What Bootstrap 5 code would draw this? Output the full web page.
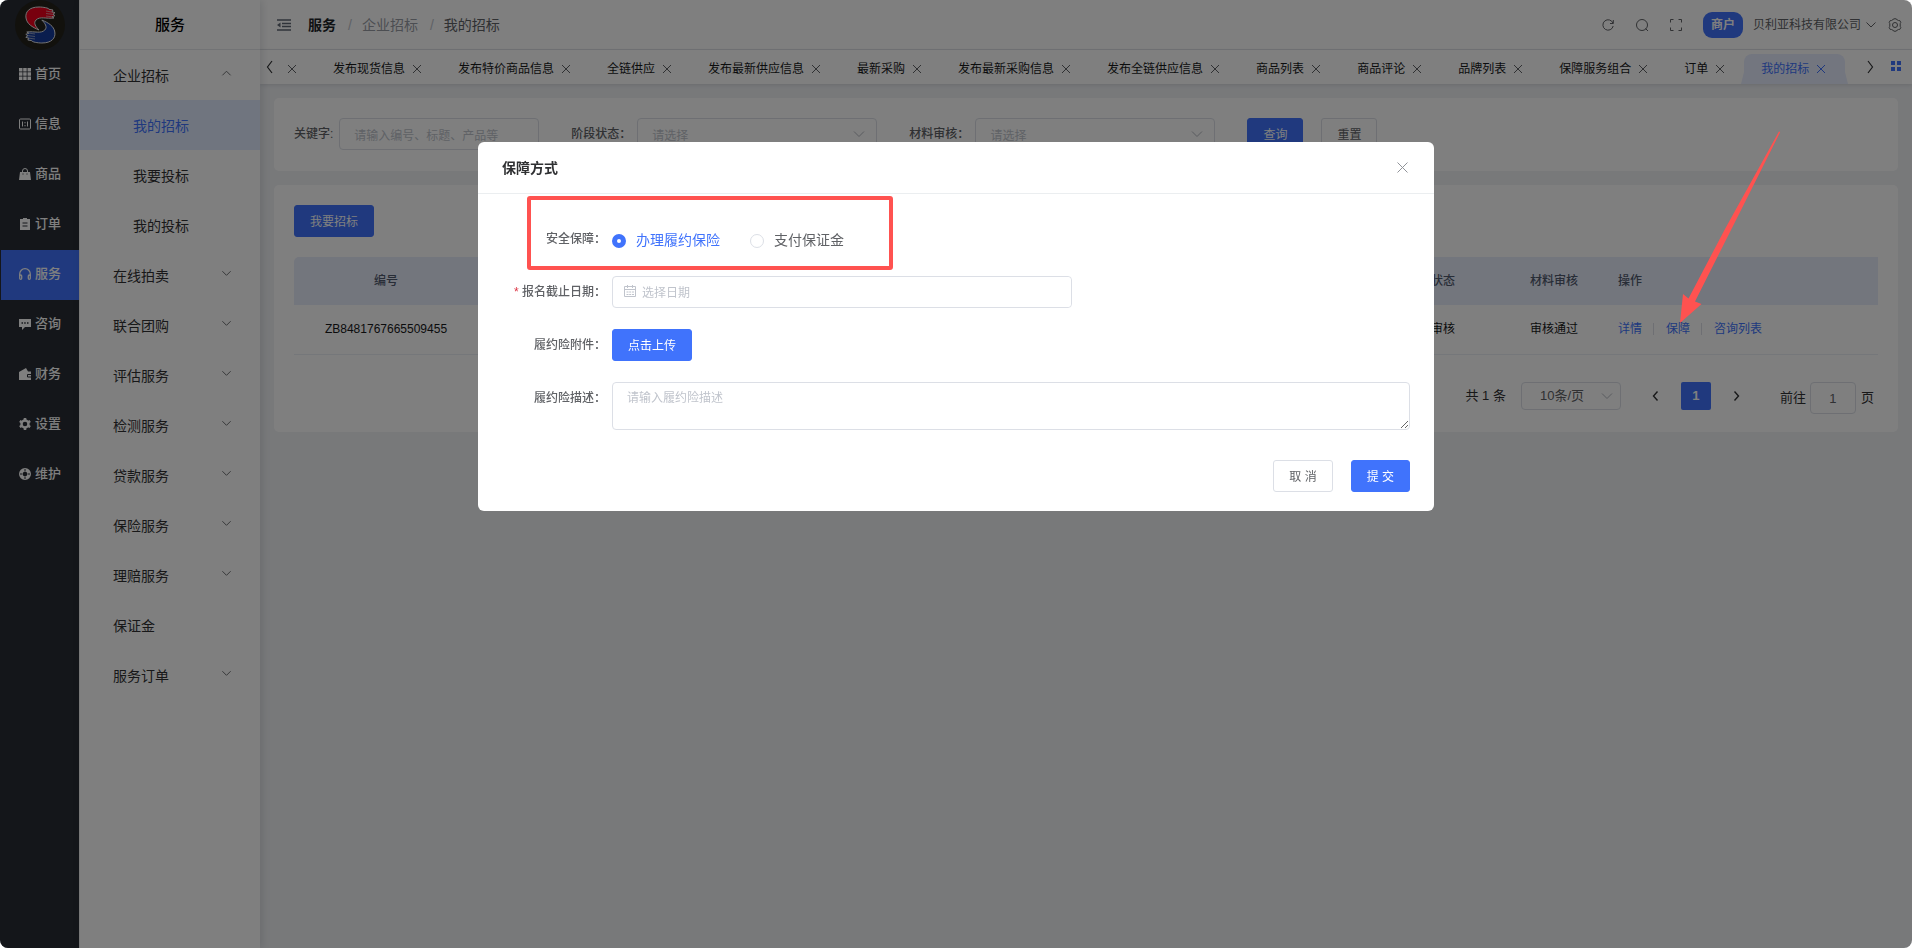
<!DOCTYPE html>
<html lang="zh-CN">
<head>
<meta charset="utf-8">
<meta name="viewport" content="width=device-width, initial-scale=1">
<title>我的招标</title>
<link href="https://cdn.jsdelivr.net/npm/bootstrap@5.3.0/dist/css/bootstrap.min.css" rel="stylesheet">
<script defer src="https://cdn.jsdelivr.net/npm/bootstrap@5.3.0/dist/js/bootstrap.bundle.min.js"></script>
<style>
:root{--brand:#4073fc;--brand-soft:#e0ebff;--ink:#303133;--ink-2:#606266;--line:#dcdfe6;--hint:#c0c4cc}
body{font-family:"Liberation Sans","Noto Sans CJK SC",sans-serif;font-size:12px;line-height:20px;color:var(--ink);background:#fff}
a{text-decoration:none;color:inherit}
svg{display:block;flex:none}
.ico{fill:none;stroke:currentColor;stroke-width:1}
.app-frame{border-radius:8px}
/* first-level rail */
.rail{width:79px;background:#282c34;color:#fff;font-size:13px;font-weight:500}
.rail-logo{height:50px}
.rail a{height:50px;padding:0 0 2px 19px;gap:4px}
.rail a.active{background:var(--brand);border-left:1px solid #282c34;padding-left:18px}
/* second-level menu */
.submenu{width:181px;background:#fff;border-left:1px solid #eee;box-shadow:2px 0 8px rgba(0,21,41,.12);z-index:2;font-size:14px}
.submenu-title{height:50px;border-bottom:1px solid #e4e6ea;font-size:15px;font-weight:500;color:#000}
.submenu a{height:50px;padding:1px 28px 0 33px}
.submenu a.sub{padding-left:53px}
.submenu a.active{background:var(--brand-soft);color:var(--brand)}
.submenu a svg{margin-top:-4px;color:var(--ink-2)}
/* top bar */
.topbar{height:50px;border-bottom:1px solid #e4e6ea;padding:0 10px 0 17px;background:#fff}
.crumbs{--bs-breadcrumb-divider-color:var(--hint);--bs-breadcrumb-item-padding-x:12px;font-size:14px;color:#999ca5;margin-left:17px}
.crumbs .breadcrumb-item+.breadcrumb-item::before{padding-right:10px}
.tools{color:var(--ink-2);gap:20px}
.account{margin:0 11px 0 10px}
.tag-merchant{height:26px;width:40px;border-radius:9px;background:var(--brand);color:#fff;font-weight:700;font-size:12px}
.tabbar{height:34px;background:#fff;box-shadow:0 1px 4px rgba(0,21,41,.12);z-index:1}
.tabbar .strip{padding-top:4px}
.tab-item{height:30px;padding:0 17px;gap:5px;white-space:nowrap;color:#17181a}
.tab-item svg{color:#606266}
.tab-item.first{padding-left:3px}
.tab-item.active{background:#e6ecff;color:var(--brand);border-radius:8px 8px 0 0;position:relative}
.tab-item.active svg{color:var(--brand)}
.tab-item.active::before,.tab-item.active::after{content:"";position:absolute;bottom:0;border-bottom:12px solid #e6ecff}
.tab-item.active::before{right:100%;border-left:3px solid transparent}
.tab-item.active::after{left:100%;border-right:3px solid transparent}
.page-body{background:#f0f2f5;padding:14px;gap:14px}
.panel{background:#fff;border-radius:5px;padding:20px 20px 18px}
.panel-search{padding-bottom:21px}
/* controls */
.btn{--bs-btn-font-size:12px;--bs-btn-line-height:20px;--bs-btn-border-radius:3px;padding:6px 15px 4px;white-space:nowrap}
.btn-brand{--bs-btn-color:#fff;--bs-btn-bg:var(--brand);--bs-btn-border-color:var(--brand);--bs-btn-hover-bg:#6690ff;--bs-btn-hover-color:#fff}
.btn-plain{--bs-btn-color:#606266;--bs-btn-bg:#fff;--bs-btn-border-color:var(--line);--bs-btn-hover-border-color:var(--brand);--bs-btn-hover-color:var(--brand)}
.form-control,.form-select{font-size:12px;line-height:20px;height:32px;padding:7px 14px 3px;border-color:var(--line);border-radius:4px;color:var(--ink-2)}
.form-select{color:var(--hint);background-size:12px 12px;background-position:right 11px center;background-image:url("data:image/svg+xml,%3Csvg xmlns='http://www.w3.org/2000/svg' viewBox='0 0 12 12'%3E%3Cpath d='M1 3.5l5 5 5-5' fill='none' stroke='%23b4b8c0'/%3E%3C/svg%3E")}
.form-control::placeholder{color:var(--hint)}
.field{gap:6px}
.field label{color:var(--ink-2);white-space:nowrap;font-weight:500}
.w-key{width:200px}.w-sel{width:240px}
.bids{table-layout:fixed;margin:20px 0 0}
.bids th,.bids td{padding:14px 10px;text-align:center;font-weight:400}
.bids th{height:48px;background:#e6ecfb;border:0;color:#515a6e;font-weight:500}
.bids td{height:49px;border-bottom:1px solid #ebeef5;color:#17181a}
.bids th:last-child,.bids td:last-child{text-align:left}
.bids th:first-child{border-radius:5px 0 0 0}
.bids .bar{width:1px;height:12px;background:var(--line);margin:0 12px 0 11px}
.bids td a{color:var(--brand)}
.pager{font-size:13px;padding:27px 4px 0 0;line-height:28px}
.pager .form-select,.pager .form-control{font-size:13px}
.pager .form-select{width:100px;height:28px;padding:3px 15px 3px 18px;color:var(--ink-2);background-position:right 7px center;margin:0 28px 0 15px}
.pager .jump{width:46px;text-align:center;padding:6px 0 4px;margin:0 5px 0 4px}
.pager .num{width:30px;height:28px;border-radius:2px;background:var(--brand);color:#fff;font-weight:700;margin:0 20px}
.pager button{border:0;padding:0}
.pager .step{background:none;color:var(--ink)}
.veil{background:rgba(0,0,0,.5);z-index:5}
/* dialog */
.dlg{--bs-modal-width:50%}
.dlg .modal-dialog{margin-top:15vh}
.dlg .modal-content{border:0;border-radius:6px}
.dlg .modal-header{height:52px;padding:0 23px 0 24px;border-color:#ebeef0}
.dlg .modal-title{font-size:14px;line-height:24px;font-weight:700;color:var(--ink)}
.dlg-close{border:0;background:none;padding:0;color:#909399}
.dlg .modal-body{padding:29px 24px 30px 30px}
.dlg .modal-footer{border:0;padding:0 24px 19px;gap:18px}
.dlg .modal-footer>*{margin:0}
.dlg .field{align-items:flex-start}
.dlg .field>.cap{width:98px;flex:none;text-align:right;line-height:20px;padding-top:6px;color:var(--ink-2);font-weight:500}
.dlg .row-gap-form{gap:21px}
.radio-line{height:32px;gap:30px;font-size:14px;padding-top:2px}
.radio-line label{gap:10px;font-size:14px;font-weight:400}
.radio-line input{appearance:none;width:14px;height:14px;margin:2px 0 0;border:1px solid var(--line);border-radius:50%;background:#fff}
.radio-line input:checked{border:5px solid var(--brand)}
.radio-line input:checked+span{color:var(--brand)}
.date-box{width:460px;height:32px;border:1px solid var(--line);border-radius:4px;padding-left:10px;gap:5px}
.date-box input{border:0;height:30px;padding:6px 0 4px}
.desc-box{height:48px;padding-top:5px}
.marker{top:2px;left:49px;width:366px;height:74px;border:4px solid #ff5250;border-radius:3px;pointer-events:none}
.pointer-arrow{z-index:1060;top:130px;right:130px;pointer-events:none}
</style>
</head>
<body>
<svg width="0" height="0" class="position-absolute" aria-hidden="true">
<symbol id="x" viewBox="0 0 14 14"><path d="M3 3l8 8M11 3l-8 8"/></symbol>
<symbol id="down" viewBox="0 0 12 12"><path d="M1.500 3.500L6 8l4.500-4.500"/></symbol>
<symbol id="up" viewBox="0 0 12 12"><path d="M1.500 8L6 3.500 10.500 8"/></symbol>
</svg>
<div class="app-frame d-flex vh-100 overflow-hidden position-relative">
<nav class="rail d-flex flex-column flex-shrink-0">
  <div class="rail-logo d-flex justify-content-center">
    <svg width="50" height="50" viewBox="15 0 50 50"><circle cx="40" cy="25" r="25" fill="#24221a"/>
      <g stroke="#e8e8e8" stroke-width="1" stroke-linejoin="round"><path fill="#f0001c" d="M39 7C29 7 25 12 26 18c1 6 6 9 13 12-3-3-6-7-3-10 4-4 10-1 18-2l-2-1.300 3-1-2-1.500 2-1.500-3-1 1-1.700-4-.7C49 8 43 7 39 7z"/></g>
      <g transform="rotate(180 40.400 25)" stroke="#e8e8e8" stroke-width="1" stroke-linejoin="round"><path fill="#143a9c" d="M39 7C29 7 25 12 26 18c1 6 6 9 13 12-3-3-6-7-3-10 4-4 10-1 18-2l-2-1.300 3-1-2-1.500 2-1.500-3-1 1-1.700-4-.7C49 8 43 7 39 7z"/></g>
      <path d="M46 11l7 1.300M46 13.500l8 1M46 16l7 1M28 33l7 1M27 35.500l8 1M28 38l7 1" stroke="#ddd" stroke-width=".6"/></svg>
  </div>
  <a href="#" class="d-flex align-items-center"><svg width="12" height="12" fill="currentColor"><path d="M0 0h3.500v3.500H0zM4.200 0h3.500v3.500H4.200zM8.500 0H12v3.500H8.500zM0 4.200h3.500v3.500H0zM4.200 4.200h3.500v3.500H4.200zM8.500 4.200H12v3.500H8.500zM0 8.500h3.500V12H0zM4.200 8.500h3.500V12H4.200zM8.500 8.500H12V12H8.500z"/></svg>首页</a>
  <a href="#" class="d-flex align-items-center"><svg width="12" height="12" class="ico"><rect x=".5" y="1" width="11" height="10" rx="1"/><path d="M3.500 3.500v5M8.500 3.500v5M6 4v1.300M6 7v1.300"/></svg>信息</a>
  <a href="#" class="d-flex align-items-center"><svg width="12" height="12"><path d="M3.500 5V3a2.500 2.500 0 015 0v2" class="ico"/><path fill="currentColor" d="M1 4h10l1 8H0z"/><path d="M4 5.500v1M8 5.500v1" stroke="#282c34"/></svg>商品</a>
  <a href="#" class="d-flex align-items-center"><svg width="12" height="12"><path fill="currentColor" d="M1 1h3V0h4v1h3v11H1z"/><path d="M3.500 5h5M3.500 8h5" stroke="#282c34"/></svg>订单</a>
  <a href="#" class="active d-flex align-items-center"><svg width="12" height="12" class="ico" style="stroke-width:1.300"><path d="M.7 8V6a5.300 5.300 0 0110.600 0v2"/><rect x=".7" y="7" width="2" height="4.300" rx="1"/><rect x="9.300" y="7" width="2" height="4.300" rx="1"/></svg>服务</a>
  <a href="#" class="d-flex align-items-center"><svg width="12" height="12"><path fill="currentColor" d="M0 1h12v8H6l-3 3V9H0z"/><path d="M2.500 5h1.500M5.200 5h1.500M8 5h1.500" stroke="#282c34" stroke-width="1.400"/></svg>咨询</a>
  <a href="#" class="d-flex align-items-center"><svg width="12" height="12"><path fill="currentColor" d="M0 4l7-4 2 3.500h3V12H0z"/><path d="M12 6.500H8.500v2.500H12" fill="none" stroke="#282c34"/></svg>财务</a>
  <a href="#" class="d-flex align-items-center"><svg width="12" height="12" viewBox="0 0 12 12"><circle cx="6" cy="6" r="3.500" fill="none" stroke="currentColor" stroke-width="2.400"/><path d="M6 0v2.500M6 9.500V12M.8 3l2.200 1.300M9 7.700L11.200 9M.8 9L3 7.700M9 4.300L11.200 3" stroke="currentColor" stroke-width="2.600"/></svg>设置</a>
  <a href="#" class="d-flex align-items-center"><svg width="12" height="12"><circle cx="6" cy="6" r="4" fill="none" stroke="currentColor" stroke-width="4"/><circle cx="6" cy="6" r="2.200" fill="#282c34"/><path d="M6 1v2.500M6 8.500V11M1 6h2.500M8.500 6H11" stroke="#282c34" stroke-width="1"/></svg>维护</a>
</nav>
<nav class="submenu d-flex flex-column flex-shrink-0">
  <div class="submenu-title d-flex align-items-center justify-content-center">服务</div>
  <a href="#" class="d-flex align-items-center justify-content-between">企业招标<svg class="ico" width="11" height="11"><use href="#up"/></svg></a>
  <a href="#" class="sub active d-flex align-items-center">我的招标</a>
  <a href="#" class="sub d-flex align-items-center">我要投标</a>
  <a href="#" class="sub d-flex align-items-center">我的投标</a>
  <a href="#" class="d-flex align-items-center justify-content-between">在线拍卖<svg class="ico" width="11" height="11"><use href="#down"/></svg></a>
  <a href="#" class="d-flex align-items-center justify-content-between">联合团购<svg class="ico" width="11" height="11"><use href="#down"/></svg></a>
  <a href="#" class="d-flex align-items-center justify-content-between">评估服务<svg class="ico" width="11" height="11"><use href="#down"/></svg></a>
  <a href="#" class="d-flex align-items-center justify-content-between">检测服务<svg class="ico" width="11" height="11"><use href="#down"/></svg></a>
  <a href="#" class="d-flex align-items-center justify-content-between">贷款服务<svg class="ico" width="11" height="11"><use href="#down"/></svg></a>
  <a href="#" class="d-flex align-items-center justify-content-between">保险服务<svg class="ico" width="11" height="11"><use href="#down"/></svg></a>
  <a href="#" class="d-flex align-items-center justify-content-between">理赔服务<svg class="ico" width="11" height="11"><use href="#down"/></svg></a>
  <a href="#" class="d-flex align-items-center">保证金</a>
  <a href="#" class="d-flex align-items-center justify-content-between">服务订单<svg class="ico" width="11" height="11"><use href="#down"/></svg></a>
</nav>
<div class="d-flex flex-column flex-grow-1 overflow-hidden">
  <header class="topbar d-flex align-items-center">
    <svg width="14" height="12" style="color:#606875"><path d="M0 1h14M5 4.500h9M5 7.500h9M0 11h14" stroke="currentColor" stroke-width="1.600"/><path d="M0 6l3.500-2.500v5z" fill="currentColor"/></svg>
    <ol class="crumbs breadcrumb mb-0">
      <li class="breadcrumb-item"><a href="#" class="fw-bold text-dark">服务</a></li>
      <li class="breadcrumb-item"><a href="#">企业招标</a></li>
      <li class="breadcrumb-item" style="color:#606266">我的招标</li>
    </ol>
    <div class="tools d-flex align-items-center ms-auto">
      <svg class="ico" width="14" height="14"><path d="M12 5.200A5.200 5.200 0 1012.200 8M12.300 2v3.500H9"/></svg>
      <svg class="ico" width="14" height="14"><circle cx="7" cy="7" r="5.500"/><path d="M10.500 10.500l2.500 2.500"/></svg>
      <svg class="ico" width="14" height="14"><path d="M1.500 4.500v-3h3M9.500 1.500h3v3M12.500 9.500v3h-3M4.500 12.500h-3v-3"/></svg>
      <div class="d-flex align-items-center">
        <span class="tag-merchant d-flex align-items-center justify-content-center">商户</span>
        <a href="#" class="account d-flex align-items-center">贝利亚科技有限公司<svg class="ico ms-1" width="12" height="12"><use href="#down"/></svg></a>
        <svg class="ico" width="14" height="14"><path d="M5 1.500L6 .8h2l1 .9 1.500.8 1.300.1 1 1.800-.6 1.300v2.600l.6 1.300-1 1.800-1.300.1-1.500.8-1 .9H6l-1-.9-1.500-.8-1.300-.1-1-1.800.6-1.300V5.700l-.6-1.300 1-1.800 1.300-.1z"/><circle cx="7" cy="7" r="2.500"/></svg>
      </div>
    </div>
  </header>
  <div class="tabbar d-flex flex-shrink-0 position-relative">
    <svg class="ico" style="stroke-width:1.200" width="22" height="34"><path d="M12 11l-4.500 6 4.500 6"/></svg>
    <div class="strip d-flex flex-grow-1 overflow-hidden">
      <a href="#" class="tab-item first d-flex align-items-center"><svg class="ico" width="14" height="14"><use href="#x"/></svg></a>
      <a href="#" class="tab-item d-flex align-items-center">发布现货信息<svg class="ico" width="14" height="14"><use href="#x"/></svg></a>
      <a href="#" class="tab-item d-flex align-items-center">发布特价商品信息<svg class="ico" width="14" height="14"><use href="#x"/></svg></a>
      <a href="#" class="tab-item d-flex align-items-center">全链供应<svg class="ico" width="14" height="14"><use href="#x"/></svg></a>
      <a href="#" class="tab-item d-flex align-items-center">发布最新供应信息<svg class="ico" width="14" height="14"><use href="#x"/></svg></a>
      <a href="#" class="tab-item d-flex align-items-center">最新采购<svg class="ico" width="14" height="14"><use href="#x"/></svg></a>
      <a href="#" class="tab-item d-flex align-items-center">发布最新采购信息<svg class="ico" width="14" height="14"><use href="#x"/></svg></a>
      <a href="#" class="tab-item d-flex align-items-center">发布全链供应信息<svg class="ico" width="14" height="14"><use href="#x"/></svg></a>
      <a href="#" class="tab-item d-flex align-items-center">商品列表<svg class="ico" width="14" height="14"><use href="#x"/></svg></a>
      <a href="#" class="tab-item d-flex align-items-center">商品评论<svg class="ico" width="14" height="14"><use href="#x"/></svg></a>
      <a href="#" class="tab-item d-flex align-items-center">品牌列表<svg class="ico" width="14" height="14"><use href="#x"/></svg></a>
      <a href="#" class="tab-item d-flex align-items-center">保障服务组合<svg class="ico" width="14" height="14"><use href="#x"/></svg></a>
      <a href="#" class="tab-item d-flex align-items-center">订单<svg class="ico" width="14" height="14"><use href="#x"/></svg></a>
      <a href="#" class="tab-item active d-flex align-items-center">我的招标<svg class="ico" width="14" height="14"><use href="#x"/></svg></a>
    </div>
    <svg class="ico" style="stroke-width:1.200" width="25" height="34"><path d="M11 11l4.500 6L11 23"/></svg>
    <svg width="30" height="34" fill="#4073fc"><path d="M9 11h4v4H9zM15 11h4v4h-4zM9 17h4v4H9zM15 17h4v4h-4z"/></svg>
  </div>
  <main class="page-body d-flex flex-column flex-grow-1">
    <form class="panel panel-search d-flex align-items-start">
      <div class="field d-flex align-items-center"><label for="kw">关键字:</label><input id="kw" class="form-control w-key" placeholder="请输入编号、标题、产品等"></div>
      <div class="field d-flex align-items-center" style="margin-left:32px"><label for="stage">阶段状态：</label><select id="stage" class="form-select w-sel"><option>请选择</option></select></div>
      <div class="field d-flex align-items-center" style="margin-left:32px"><label for="audit">材料审核：</label><select id="audit" class="form-select w-sel"><option>请选择</option></select></div>
      <button type="button" class="btn btn-brand" style="margin-left:32px">查询</button>
      <button type="button" class="btn btn-plain" style="margin-left:18px">重置</button>
    </form>
    <section class="panel">
      <button type="button" class="btn btn-brand">我要招标</button>
      <table class="bids table table-borderless">
        <colgroup><col style="width:184px"><col><col style="width:138px"><col style="width:108px"><col style="width:270px"></colgroup>
        <thead><tr><th>编号</th><th></th><th>阶段状态</th><th>材料审核</th><th>操作</th></tr></thead>
        <tbody><tr><td>ZB8481767665509455</td><td></td><td>等待审核</td><td>审核通过</td>
          <td><div class="d-flex align-items-center"><a href="#">详情</a><span class="bar"></span><a href="#">保障</a><span class="bar"></span><a href="#">咨询列表</a></div></td></tr></tbody>
      </table>
      <div class="pager d-flex justify-content-end align-items-start">
        <span>共 1 条</span>
        <select class="form-select" aria-label="每页条数"><option>10条/页</option></select>
        <button type="button" class="step" aria-label="上一页"><svg class="ico" style="stroke-width:1.400" width="12" height="28"><path d="M8.500 9.500L4.500 14l4 4.500"/></svg></button>
        <button type="button" class="num">1</button>
        <button type="button" class="step" aria-label="下一页"><svg class="ico" style="stroke-width:1.400" width="12" height="28"><path d="M3.500 9.500l4 4.500-4 4.500"/></svg></button>
        <div class="d-flex align-items-center" style="margin-left:37px"><label for="jump">前往</label><input id="jump" class="form-control jump" value="1"><span>页</span></div>
      </div>
    </section>
  </main>
</div>
<div class="veil position-absolute top-0 start-0 w-100 h-100"></div>
</div>

<div class="dlg modal d-block" role="dialog" aria-labelledby="dlgTitle">
  <div class="modal-dialog">
    <div class="modal-content">
      <div class="modal-header d-flex align-items-center">
        <h1 class="modal-title" id="dlgTitle">保障方式</h1>
        <button type="button" class="dlg-close" aria-label="关闭"><svg class="ico" width="17" height="17" viewBox="0 0 17 17"><path d="M3.500 3.500l10 10M13.500 3.500l-10 10"/></svg></button>
      </div>
      <div class="modal-body row-gap-form d-flex flex-column position-relative">
        <div class="field d-flex" role="radiogroup" aria-labelledby="modeCap"><span class="cap" id="modeCap">安全保障：</span>
          <div class="radio-line d-flex align-items-center">
            <label class="d-flex align-items-center"><input type="radio" name="mode" checked><span>办理履约保险</span></label>
            <label class="d-flex align-items-center"><input type="radio" name="mode"><span>支付保证金</span></label>
          </div></div>
        <div class="field d-flex"><label class="cap" for="deadline"><span class="text-danger">*</span> 报名截止日期：</label>
          <div class="date-box d-flex align-items-center"><svg class="ico" style="color:#c0c4cc" width="14" height="16"><path d="M1.500 2.500h11v10h-11zM1.500 5.500h11M4.500 1v3M9.500 1v3M3.500 8h2M6.200 8h2M9 8h2M3.500 10.500h2M6.200 10.500h2M9 10.500h2"/></svg><input id="deadline" class="form-control shadow-none" placeholder="选择日期"></div></div>
        <div class="field d-flex"><span class="cap">履约险附件：</span><button type="button" class="btn btn-brand">点击上传</button></div>
        <div class="field d-flex"><label class="cap" for="desc">履约险描述：</label><textarea id="desc" class="form-control desc-box flex-fill" placeholder="请输入履约险描述"></textarea></div>
        <div class="marker position-absolute"></div>
      </div>
      <div class="modal-footer">
        <button type="button" class="btn btn-plain">取 消</button>
        <button type="button" class="btn btn-brand">提 交</button>
      </div>
    </div>
  </div>
</div>
<svg class="pointer-arrow position-absolute" width="106" height="196" viewBox="0 0 106 196"><path fill="#ff5250" d="M103 1.500l1.200.5L55 100 19 171.500l6.500 2.500L4 193 7 164l5.500 4.500L49 99z"/></svg>
</body>
</html>
